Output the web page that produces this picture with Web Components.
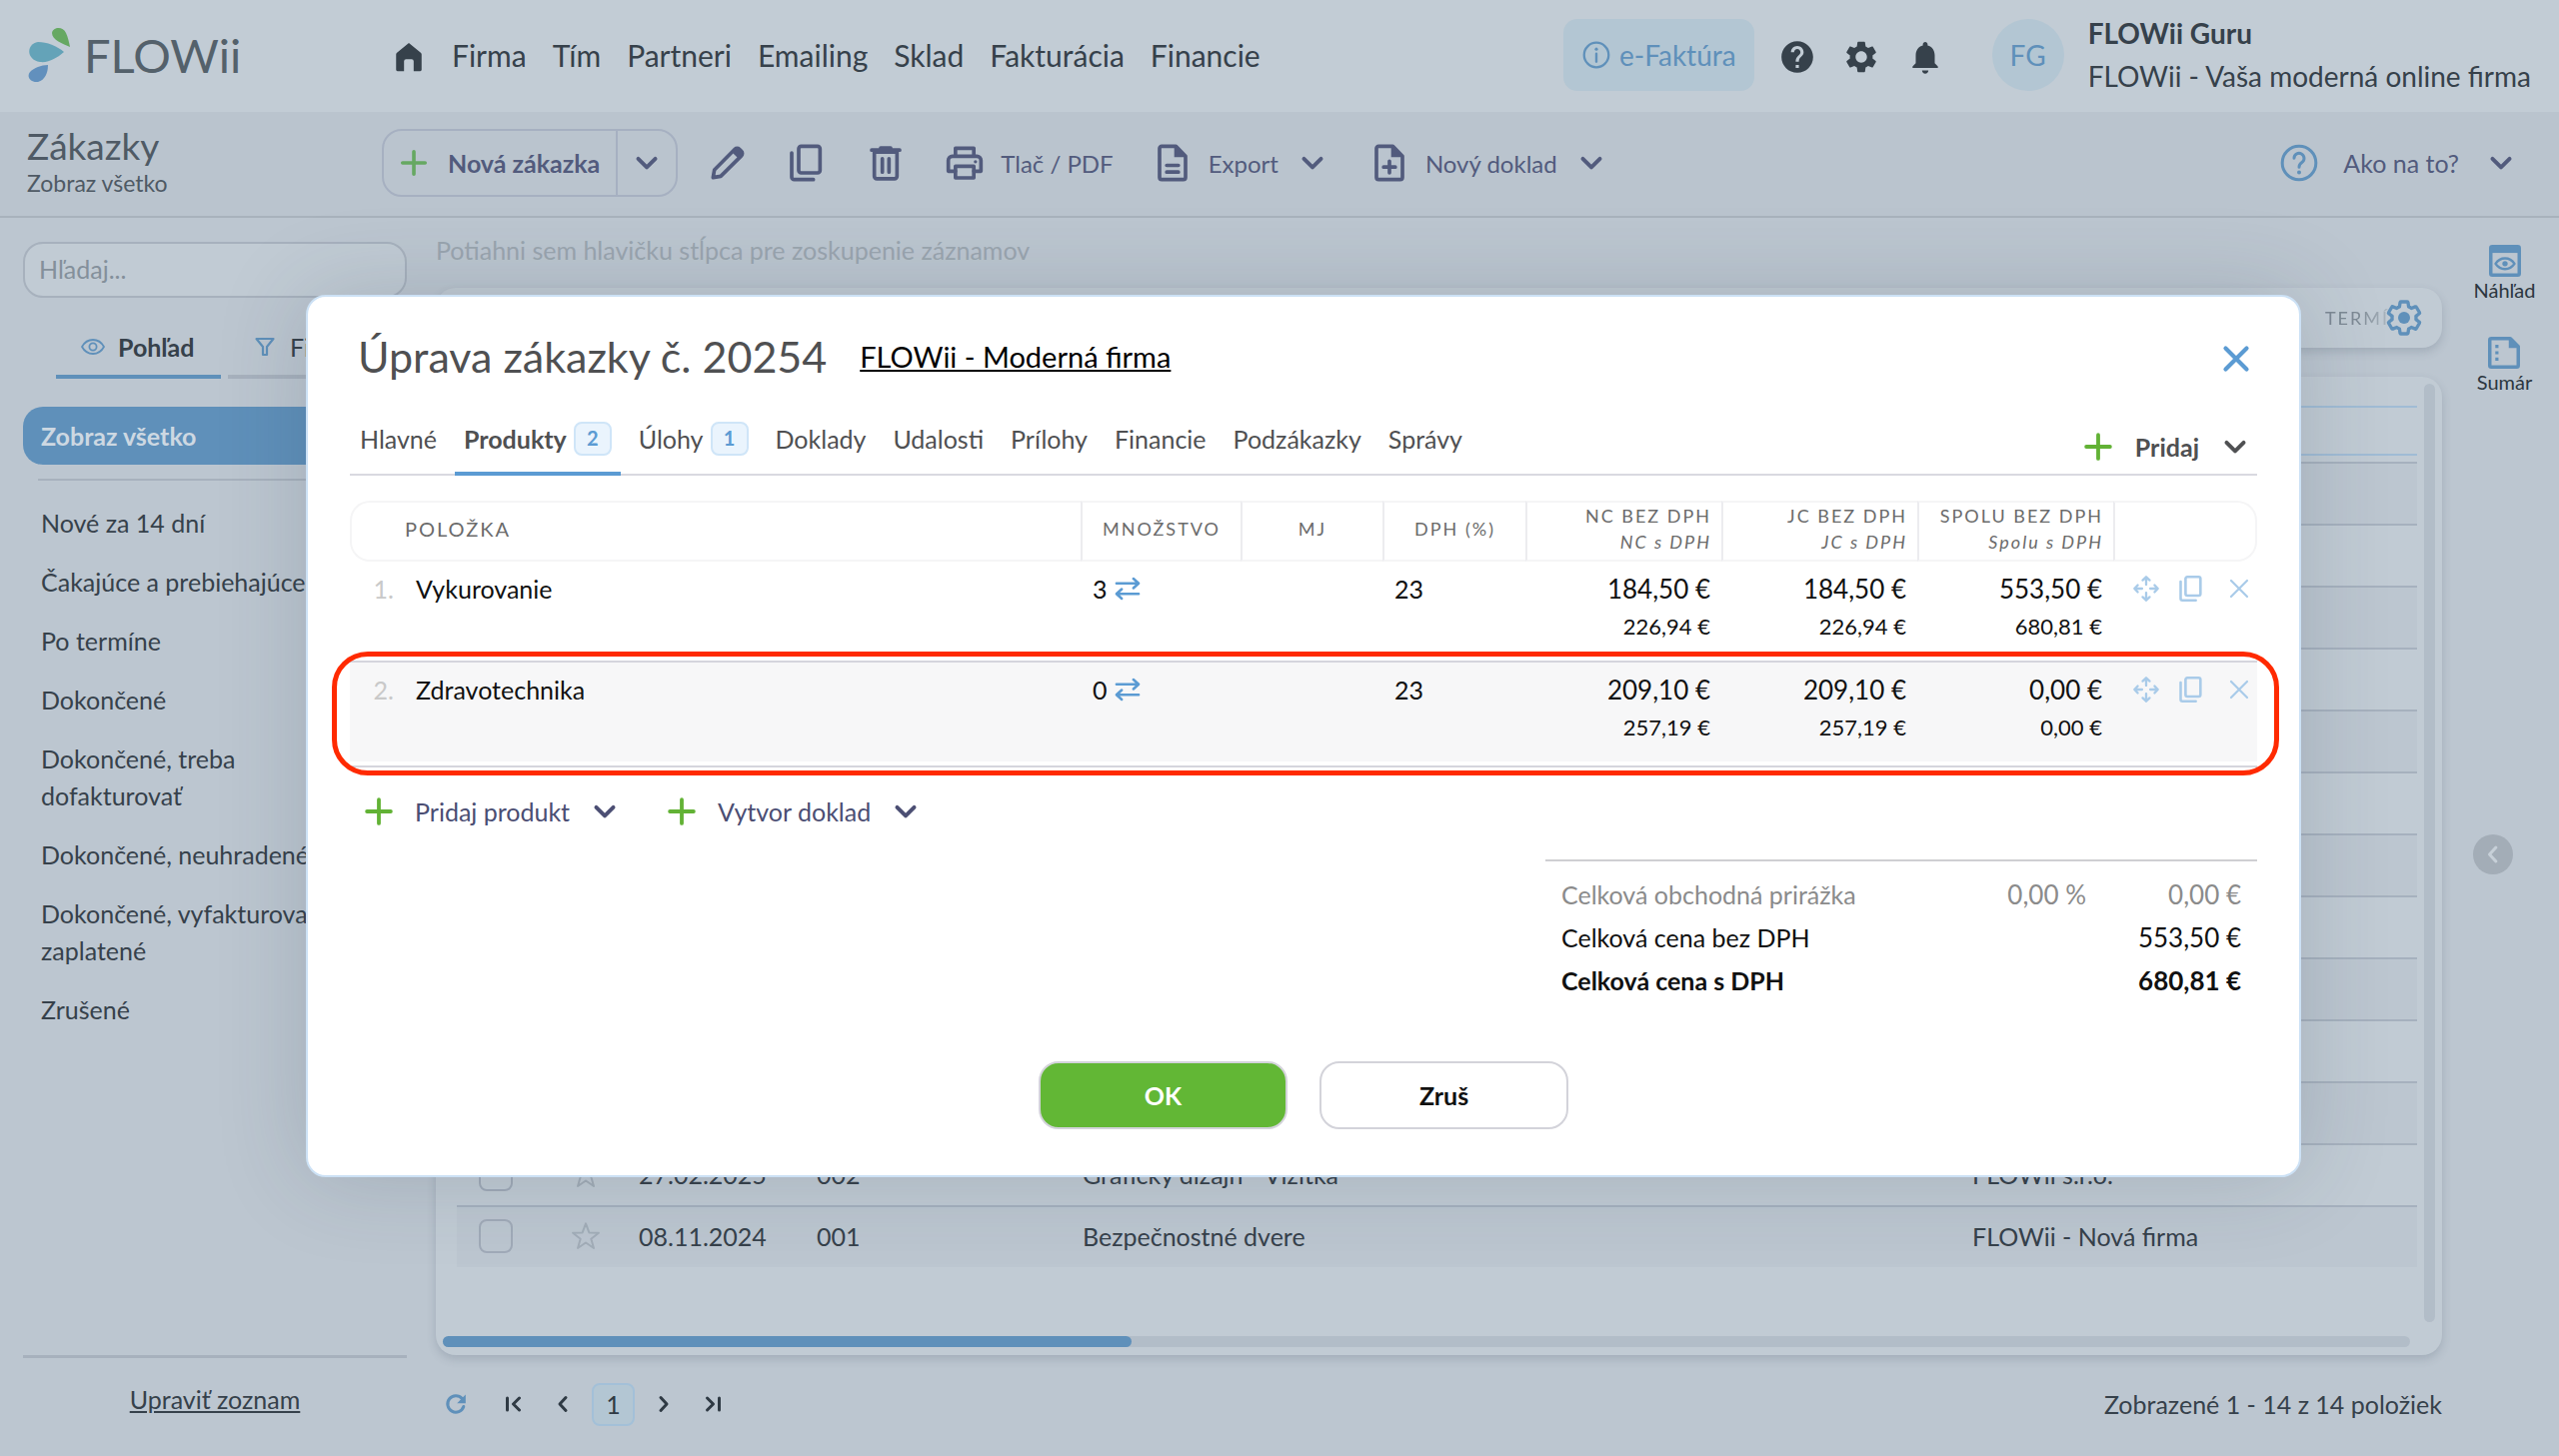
<!DOCTYPE html>
<html lang="sk">
<head>
<meta charset="utf-8">
<title>FLOWii - Zákazky</title>
<style>
    body {
        margin: 0;
        font-family: Lato, "Open Sans", sans-serif;
        font-size: 25px;
        line-height: 37px;
        color: #36414b;
        background: #bcc6d0;
        --blue: #5f90ba;
        --line: #a7b1bd;
        --ink: #525b7d;
        --green: #62b235;
    }
</style>
</head>
<body>
<flow-app></flow-app>

<script>
// Icon shapes on a 24x24 grid. "s" is drawn with strokes, "f" is filled.
const GEAR = 'M19.14 12.94c.04-.3.06-.61.06-.94 0-.32-.02-.64-.07-.94l2.03-1.58c.18-.14.23-.41.12-.61l-1.92-3.32c-.12-.22-.37-.29-.59-.22l-2.39.96c-.5-.38-1.03-.7-1.62-.94l-.36-2.54c-.04-.24-.24-.41-.48-.41h-3.84c-.24 0-.43.17-.47.41l-.36 2.54c-.59.24-1.13.57-1.62.94l-2.39-.96c-.22-.08-.47 0-.59.22L2.74 8.87c-.12.21-.08.47.12.61l2.03 1.58c-.05.3-.09.63-.09.94s.02.64.07.94l-2.03 1.58c-.18.14-.23.41-.12.61l1.92 3.32c.12.22.37.29.59.22l2.39-.96c.5.38 1.03.7 1.62.94l.36 2.54c.05.24.24.41.48.41h3.84c.24 0 .44-.17.47-.41l.36-2.54c.59-.24 1.13-.56 1.62-.94l2.39.96c.22.08.47 0 .59-.22l1.92-3.32c.12-.22.07-.47-.12-.61l-2.01-1.58z';

const ICONS = {
    home: '<path class="f" d="M12 2.2 20.4 9a1.6 1.6 0 0 1 .6 1.2V21a1 1 0 0 1-1 1h-4.6v-7a1.5 1.5 0 0 0-1.5-1.5h-3.8A1.5 1.5 0 0 0 8.600 15v7H4a1 1 0 0 1-1-1V10.200A1.600 1.600 0 0 1 3.600 9z"/>',
    info: '<circle class="s" cx="12" cy="12" r="9.200" stroke-width="1.700"/><path class="s" d="M12 11v6" stroke-width="1.800"/><circle class="f" cx="12" cy="7.600" r="1.200"/>',
    help: '<path class="f" d="M12 2C6.480 2 2 6.480 2 12s4.480 10 10 10 10-4.480 10-10S17.520 2 12 2zm1 17h-2v-2h2v2zm2.070-7.750l-.9.920C13.450 12.900 13 13.500 13 15h-2v-.5c0-1.100.45-2.100 1.170-2.830l1.240-1.260c.37-.36.59-.86.59-1.410 0-1.100-.9-2-2-2s-2 .9-2 2H8c0-2.210 1.790-4 4-4s4 1.790 4 4c0 .88-.36 1.680-.93 2.250z"/>',
    question: '<circle class="s" cx="12" cy="12" r="10.100" stroke-width="1.800"/><path class="s" d="M9 9.200a3 3 0 1 1 4.700 2.500C12.500 12.500 12 13.200 12 14.500" stroke-width="1.800"/><circle class="f" cx="12" cy="17.700" r="1.200"/>',
    gear: `<path class="f" fill-rule="evenodd" d="${GEAR}M12 15.600c-1.980 0-3.600-1.620-3.600-3.600s1.620-3.600 3.600-3.600 3.600 1.620 3.600 3.600-1.620 3.600-3.600 3.600z"/>`,
    gearline: `<path class="s" stroke-width="2" d="${GEAR}"/><circle class="f" cx="12" cy="12" r="3.600"/>`,
    bell: '<path class="f" d="M12 22.500c1.100 0 2-.9 2-2h-4c0 1.100.89 2 2 2zm6-6.500v-5c0-3.070-1.640-5.640-4.500-6.320V4c0-.83-.67-1.500-1.500-1.500s-1.500.67-1.500 1.500v.68C7.630 5.360 6 7.920 6 11v5l-2 2v1h16v-1l-2-2z"/>',
    plus: '<path class="s" d="M12 4.500v15M4.500 12h15" stroke-width="2.400"/>',
    down: '<path class="s" d="M6.300 9.200 12 14.900l5.700-5.700" stroke-width="2.600"/>',
    pencil: '<path class="s" d="M3.200 20.800l.8-4.600L16.300 3.800a1.900 1.900 0 0 1 2.700 0l1.200 1.200a1.900 1.900 0 0 1 0 2.700L7.800 20z"/><path class="f" d="M14.500 5.600l2-2.100c.9-.8 2-.8 2.900 0l1.100 1.100c.8.900.8 2 0 2.900l-2 2z"/>',
    copy: '<rect class="s" x="7.200" y="2" width="12.800" height="16" rx="1.500"/><path class="s" d="M3 6v14.500A1.500 1.500 0 0 0 4.500 22H16"/>',
    trash: '<path class="s" d="M5.200 5.500h13.600V20a1.500 1.500 0 0 1-1.500 1.500H6.700A1.500 1.500 0 0 1 5.200 20zM3.600 4.300h16.800M9 3h6M10 9.500v8M14 9.500v8"/>',
    printer: '<path class="s" d="M6.500 8V3.200h11V8M6.500 17H2.200v-6.500A2.500 2.500 0 0 1 4.700 8h14.600a2.500 2.500 0 0 1 2.500 2.500V17h-4.300"/><rect class="s" x="6.500" y="14" width="11" height="7"/><circle class="f" cx="18.500" cy="11.300" r="1"/>',
    doc: '<path class="s" d="M14 2H5.500A1.300 1.300 0 0 0 4.200 3.300v17.400A1.300 1.300 0 0 0 5.500 22h13a1.300 1.300 0 0 0 1.300-1.300V8zM8.500 13.500h7M8.500 17.500h7"/><path class="f" d="M13 2v6.500h6.800z"/>',
    docplus: '<path class="s" d="M14 2H5.500A1.300 1.300 0 0 0 4.200 3.300v17.400A1.300 1.300 0 0 0 5.500 22h13a1.300 1.300 0 0 0 1.300-1.300V8zM12 11v7M8.500 14.500h7"/><path class="f" d="M13 2v6.500h6.800z"/>',
    eye: '<path class="s" stroke-width="1.800" d="M1 12C3.500 7.500 7.500 5 12 5s8.500 2.500 11 7c-2.500 4.500-6.500 7-11 7S3.500 16.500 1 12z"/><circle class="s" stroke-width="1.800" cx="12" cy="12" r="3.600"/>',
    filter: '<path class="s" d="M3.500 4h17l-6.500 8v8h-4v-8z"/>',
    preview: '<rect class="s" x="3" y="3" width="18" height="18" rx="1"/><path class="f" d="M3 3h18v4H3z"/><path class="s" stroke-width="1.500" d="M6 13.800c3-4.500 9-4.500 12 0-3 4.500-9 4.500-12 0z"/><circle class="f" cx="12" cy="13.800" r="1.700"/>',
    summary: '<path class="s" d="M16 3H4a1 1 0 0 0-1 1v16a1 1 0 0 0 1 1h16a1 1 0 0 0 1-1V8z"/><path class="f" d="M15 3v6h6z"/><path class="f" d="M6.500 7h2v2h-2zM6.500 11h2v2h-2zM6.500 15h2v2h-2z"/>',
    left: '<path class="s" d="M14.500 6l-5.500 6 5.500 6" stroke-width="2.600"/>',
    close: '<path class="s" d="M5 5l14 14M19 5L5 19" stroke-width="2.800"/>',
    thinclose: '<path class="s" d="M4 4l16 16M20 4L4 20" stroke-width="2.200"/>',
    swap: '<path class="s" stroke-width="2.200" d="M2.500 7.500H21M17 3.500l4.500 4-4.500 4M21.500 16.500H3M7 12.500l-4.500 4 4.500 4"/>',
    move: '<path class="s" stroke-width="2" d="M9 4.800 12 2l3 2.800M12 2v6.500M9 19.200l3 2.800 3-2.800M12 22v-6.500M4.800 9 2 12l2.800 3M2 12h6.500M19.200 9l2.800 3-2.800 3M22 12h-6.500"/>',
    star: '<path class="s" stroke-width="1.500" d="M12 2.500l2.500 6.800 7.200.2-5.700 4.500 2 7-6-4.100-6 4.100 2-7-5.700-4.500 7.200-.2z"/>',
    refresh: '<path class="s" stroke-width="3" d="M19.800 14.500a8.200 8.200 0 1 1-1.600-8"/><path class="f" d="M21.800 2.500v8.800h-8.600z"/>',
    first: '<path class="s" d="M5.500 6v12M17.500 6l-6 6 6 6" stroke-width="3"/>',
    prev: '<path class="s" d="M15 5.500 9 12l6 6.500" stroke-width="3"/>',
    next: '<path class="s" d="M9 5.500 15 12l-6 6.500" stroke-width="3"/>',
    last: '<path class="s" d="M18.500 6v12M6.500 6l6 6-6 6" stroke-width="3"/>'
};

// Base class: every element renders its markup once into an open root
class FlowElement extends HTMLElement {
    connectedCallback() {
        if (this.shadowRoot) return;
        this.attachShadow({ mode: 'open' });
        this.shadowRoot.innerHTML = this.template();
    }
}

const RESET = `
    * { box-sizing: border-box; }
    button, input { font: inherit; color: inherit; margin: 0; padding: 0; border: 0; background: none; }
    button { cursor: pointer; display: inline-flex; align-items: center; justify-content: center; white-space: nowrap; }
    a { color: inherit; text-decoration: none; }
    table { border-spacing: 0; width: 100%; table-layout: fixed; }
    th, td { padding: 0; text-align: left; font-weight: normal; white-space: nowrap; }
`;

class FlowIcon extends FlowElement {
    template() {
        return `
            <style>
                :host { display: inline-flex; flex: none; width: var(--size, 40px); height: var(--size, 40px); }
                svg { width: 100%; height: 100%; overflow: visible; }
                .f { fill: currentColor; }
                .s { fill: none; stroke: currentColor; stroke-linecap: round; stroke-linejoin: round; }
            </style>
            <svg viewBox="0 0 24 24" stroke-width="2.200" aria-hidden="true">${ICONS[this.getAttribute('name')]}</svg>
        `;
    }
}

// Icon + label + optional chevron
class FlowMenuButton extends FlowElement {
    template() {
        return `
            <style>
                ${RESET}
                :host { display: inline-flex; }
                button { gap: var(--gap, 18px); height: 40px; }
                .icon { color: var(--icon-color, currentColor); --size: var(--icon-size, 40px); }
                .chevron { --size: 36px; }
            </style>
            <button type="button">
                <flow-icon class="icon" name="${this.getAttribute('icon')}"></flow-icon>
                <slot></slot>
                ${this.hasAttribute('menu') ? '<flow-icon class="chevron" name="down"></flow-icon>' : ''}
            </button>
        `;
    }
}

class FlowHeader extends FlowElement {
    template() {
        const links = ['Firma', 'Tím', 'Partneri', 'Emailing', 'Sklad', 'Fakturácia', 'Financie'];
        return `
            <style>
                ${RESET}
                :host { display: block; background: #c2ccd5; }
                header { display: flex; align-items: center; height: 112px; padding: 0 28px 2px 27px; }
                .logo { display: flex; align-items: center; width: 365px; gap: 13px; font-size: 47px; color: #54616b; }
                .logo svg { width: 44px; height: 56px; }
                nav { display: flex; align-items: center; gap: 26px; font-size: 30px; }
                nav flow-icon { --size: 34px; display: flex; margin-top: 4px; }
                .tools { display: flex; align-items: center; margin-left: auto; font-size: 28px; }
                .invoice { gap: 7px; height: 72px; padding: 0 18px 0 17px; border-radius: 14px; background: #b3c6d3; color: var(--blue); margin-right: 24px; }
                .invoice flow-icon { --size: 32px; }
                .round { margin: 4px 26px 0 0; }
                .round flow-icon { --size: 38px; }
                .avatar { display: flex; align-items: center; justify-content: center; width: 72px; height: 72px; margin: 0 24px 0 22px; border-radius: 50%; background: #b3c6d3; color: var(--blue); }
                .user { line-height: 43px; }
                .user strong { display: block; }
            </style>
            <header>
                <a class="logo" href="#">
                    <svg viewBox="0 0 44 56" aria-hidden="true">
                        <path fill="#66a862" d="M43 20C36 17 25 13 25 6 26 0 36-1 39 6c2 4 3 9 4 14z"/>
                        <path fill="#64a3b8" d="M37 25c-7 6-15 11-24 10C-1 33-1 17 11 15c9 0 19 4 26 10z"/>
                        <path fill="#6290bd" d="M21 38c0 8-3 15-10 17C4 56-1 50 3 45c4-4 11-7 18-7z"/>
                    </svg>
                    FLOWii
                </a>
                <nav>
                    <a href="#" aria-label="Domov"><flow-icon name="home"></flow-icon></a>
                    ${links.map((l) => `<a href="#">${l}</a>`).join('')}
                </nav>
                <div class="tools">
                    <button class="invoice"><flow-icon name="info"></flow-icon>e-Faktúra</button>
                    <button class="round" aria-label="Pomoc"><flow-icon name="help"></flow-icon></button>
                    <button class="round" aria-label="Nastavenia"><flow-icon name="gear"></flow-icon></button>
                    <button class="round" aria-label="Upozornenia"><flow-icon name="bell"></flow-icon></button>
                    <span class="avatar">FG</span>
                    <div class="user"><strong>FLOWii Guru</strong>FLOWii - Vaša moderná online firma</div>
                </div>
            </header>
        `;
    }
}

class FlowToolbar extends FlowElement {
    template() {
        return `
            <style>
                ${RESET}
                :host { display: flex; align-items: center; height: 106px; padding: 0 40px 2px 27px; background: #bac4ce; border-bottom: 2px solid #a8b2bc; box-sizing: border-box; color: var(--ink); }
                .title { width: 355px; color: #4f5a65; }
                h1 { margin: 0; font-size: 37px; line-height: 40px; font-weight: normal; }
                .title span { display: block; font-size: 23px; line-height: 34px; }
                .split { display: flex; height: 68px; border: 2px solid #a6b0c1; border-radius: 20px; margin-right: 30px; font-weight: bold; }
                .split .new { gap: 16px; padding: 0 16px 0 12px; }
                .split .new flow-icon { --size: 36px; color: #66a862; }
                .split .more { width: 60px; border-left: 2px solid #a6b0c1; }
                .split .more flow-icon { --size: 36px; }
                .actions { display: flex; gap: 39px; font-size: 24px; --gap: 16px; }
                .how { margin-left: auto; --icon-color: var(--blue); --gap: 24px; }
            </style>
            <div class="title"><h1>Zákazky</h1><span>Zobraz všetko</span></div>
            <div class="split">
                <button class="new"><flow-icon name="plus"></flow-icon>Nová zákazka</button>
                <button class="more" aria-label="Viac"><flow-icon name="down"></flow-icon></button>
            </div>
            <div class="actions">
                <button aria-label="Upraviť"><flow-icon name="pencil"></flow-icon></button>
                <button aria-label="Kopírovať"><flow-icon name="copy"></flow-icon></button>
                <button aria-label="Zmazať"><flow-icon name="trash"></flow-icon></button>
                <flow-menu-button icon="printer">Tlač / PDF</flow-menu-button>
                <flow-menu-button icon="doc" menu>Export</flow-menu-button>
                <flow-menu-button icon="docplus" menu>Nový doklad</flow-menu-button>
            </div>
            <flow-menu-button class="how" icon="question" menu>Ako na to?</flow-menu-button>
        `;
    }
}

class FlowSidebar extends FlowElement {
    template() {
        const views = ['Nové za 14 dní', 'Čakajúce a prebiehajúce', 'Po termíne', 'Dokončené',
            'Dokončené, treba dofakturovať', 'Dokončené, neuhradené', 'Dokončené, vyfakturované, zaplatené', 'Zrušené'];
        return `
            <style>
                ${RESET}
                :host { display: flex; flex-direction: column; padding: 24px 29px 0 23px; box-sizing: border-box; }
                input { height: 56px; padding: 0 14px 2px; border: 2px solid var(--line); border-radius: 20px; background: #c1cbd4; }
                input::placeholder { color: #84909b; opacity: 1; }
                .tabs { display: flex; gap: 7px; margin: 29px 0 28px 33px; }
                .tabs button { justify-content: flex-start; width: 165px; height: 52px; padding: 0 0 8px 25px; gap: 13px; border-bottom: 4px solid var(--line); }
                .tabs button.on { border-color: var(--blue); font-weight: bold; }
                .tabs flow-icon { --size: 24px; color: var(--blue); }
                .active { display: flex; align-items: center; height: 58px; padding: 0 18px; border-radius: 20px; background: var(--blue); color: #cdd8e2; font-weight: bold; }
                ul { list-style: none; margin: 14px 0 0 15px; padding: 13px 50px 0 3px; border-top: 2px solid var(--line); }
                li { padding: 11px 0; }
                footer { margin-top: auto; height: 101px; padding-top: 23px; border-top: 3px solid var(--line); text-align: center; }
                footer a { text-decoration: underline; }
            </style>
            <input type="search" placeholder="Hľadaj..." aria-label="Hľadaj">
            <div class="tabs">
                <button class="on"><flow-icon name="eye"></flow-icon>Pohľad</button>
                <button><flow-icon name="filter"></flow-icon>Filter</button>
            </div>
            <a class="active" href="#">Zobraz všetko</a>
            <ul>${views.map((v) => `<li><a href="#">${v}</a></li>`).join('')}</ul>
            <footer><a href="#">Upraviť zoznam</a></footer>
        `;
    }
}

class FlowGrid extends FlowElement {
    row([date, number, name, firm]) {
        return `
            <tr>
                <td>${date ? '<input type="checkbox" aria-label="Vybrať">' : ''}</td>
                <td>${date ? '<flow-icon name="star"></flow-icon>' : ''}</td>
                <td>${date}</td><td>${number}</td><td>${name}</td><td>${firm}</td>
            </tr>
        `;
    }

    template() {
        const rows = Array.from({ length: 11 }, () => ['', '', '', '']);
        rows.push(['27.02.2025', '002', 'Grafický dizajn - Vizitka', 'FLOWii s.r.o.']);
        rows.push(['08.11.2024', '001', 'Bezpečnostné dvere', 'FLOWii - Nová firma']);
        return `
            <style>
                ${RESET}
                :host { display: flex; flex-direction: column; padding-top: 14px; box-sizing: border-box; min-width: 0; }
                .hint { margin: 0 0 19px; color: #9aa5af; }
                .head, .card { background: #c1cbd4; border-radius: 20px; box-shadow: 0 4px 10px rgba(60, 75, 95, .2); }
                .head { display: flex; align-items: center; justify-content: flex-end; height: 60px; padding-right: 18px; margin-bottom: 29px; }
                .head span { margin-right: -5px; font-size: 18px; letter-spacing: 2px; color: #7d8994; mask-image: linear-gradient(90deg, #000 50%, rgba(0, 0, 0, .3)); }
                .head flow-icon { --size: 40px; color: var(--blue); }
                .card { flex: 1; display: grid; grid-template-columns: 1fr 11px; grid-template-rows: 1fr 11px; gap: 14px 7px; padding: 7px 7px 8px; }
                .rows { padding: 22px 0 0 14px; min-width: 0; }
                .search { height: 50px; margin-bottom: 6px; border: solid #a0bcd5; border-width: 2px 0; }
                .vbar, .hbar { border-radius: 6px; background: #b2bdc8; }
                .hbar { grid-column: 1 / -1; margin-right: 25px; }
                .hbar div { width: 35%; height: 11px; border-radius: 6px; background: var(--blue); }
                td { height: 62px; padding: 0 0 2px 22px; border-top: 2px solid #a6b1be; }
                tr:nth-child(odd) td { background: #bcc6d0; }
                td flow-icon { --size: 32px; display: flex; color: #a2adb8; }
                input { appearance: none; display: block; width: 34px; height: 34px; border: 2px solid #a0aab8; border-radius: 8px; }
                footer { display: flex; align-items: center; height: 101px; padding-bottom: 3px; }
                footer button { width: 40px; height: 43px; margin-right: 9px; color: #2f3a44; }
                footer button flow-icon { --size: 24px; }
                footer .reload { margin-right: 18px; color: var(--blue); }
                footer .page { width: 43px; border: 2px solid #a3c0d8; border-radius: 8px; background: #b3c6d3; }
                footer span { margin-left: auto; }
            </style>
            <p class="hint">Potiahni sem hlavičku stĺpca pre zoskupenie záznamov</p>
            <div class="head"><span>TERMÍ</span><flow-icon name="gearline"></flow-icon></div>
            <div class="card">
                <div class="rows">
                    <div class="search"></div>
                    <table>
                        <colgroup><col width="91"><col width="69"><col width="178"><col width="266"><col><col width="467"></colgroup>
                        <tbody>${rows.map((r) => this.row(r)).join('')}</tbody>
                    </table>
                </div>
                <div class="vbar"></div>
                <div class="hbar"><div></div></div>
            </div>
            <footer>
                <button class="reload" aria-label="Obnoviť"><flow-icon name="refresh"></flow-icon></button>
                <button aria-label="Prvá"><flow-icon name="first"></flow-icon></button>
                <button aria-label="Predošlá"><flow-icon name="prev"></flow-icon></button>
                <button class="page">1</button>
                <button aria-label="Ďalšia"><flow-icon name="next"></flow-icon></button>
                <button aria-label="Posledná"><flow-icon name="last"></flow-icon></button>
                <span>Zobrazené 1 - 14 z 14 položiek</span>
            </footer>
        `;
    }
}

class FlowRail extends FlowElement {
    template() {
        return `
            <style>
                ${RESET}
                :host { display: flex; flex-direction: column; align-items: center; gap: 34px; padding: 24px 0 0 8px; box-sizing: border-box; }
                .item { flex-direction: column; font-size: 20px; line-height: 20px; color: #2c3740; }
                .item flow-icon { --size: 38px; color: var(--blue); }
                .toggle { width: 40px; height: 40px; margin: 409px 24px 0 0; border-radius: 50%; background: #a3adb7; color: #c7d0d8; }
                .toggle flow-icon { --size: 28px; }
            </style>
            <button class="item"><flow-icon name="preview"></flow-icon>Náhľad</button>
            <button class="item"><flow-icon name="summary"></flow-icon>Sumár</button>
            <button class="toggle" aria-label="Rozbaliť"><flow-icon name="left"></flow-icon></button>
        `;
    }
}

class FlowTab extends FlowElement {
    template() {
        const count = this.getAttribute('count');
        return `
            <style>
                ${RESET}
                :host { display: block; }
                button { height: 60px; padding: 0 9px 10px; gap: 7px; border-bottom: 4px solid transparent; }
                :host([active]) button { border-color: #5b9bd3; font-weight: bold; }
                .badge { width: 38px; height: 34px; border: 2px solid #cfe5f8; border-radius: 8px; background: #eaf4fd; color: #5b9bd3; font-size: 20px; line-height: 29px; font-weight: bold; }
            </style>
            <button type="button" role="tab"><slot></slot>${count ? `<span class="badge">${count}</span>` : ''}</button>
        `;
    }
}

class FlowOrderItems extends FlowElement {
    row(item, i) {
        const prices = item.prices.map(([net, gross]) => `<td class="num">${net}<small>${gross}</small></td>`).join('');
        return `
            <tr class="${item.marked ? 'marked' : ''}">
                <td><span class="no">${i + 1}.</span>${item.name}</td>
                <td class="qty">${item.qty} <flow-icon name="swap"></flow-icon></td>
                <td></td>
                <td class="vat">${item.vat}</td>
                ${prices}
                <td>
                    <div class="tools">
                        <button aria-label="Presunúť"><flow-icon name="move"></flow-icon></button>
                        <button aria-label="Kopírovať"><flow-icon name="copy"></flow-icon></button>
                        <button aria-label="Odstrániť"><flow-icon class="x" name="thinclose"></flow-icon></button>
                    </div>
                </td>
            </tr>
        `;
    }

    template() {
        const items = [
            { name: 'Vykurovanie', qty: 3, vat: 23, prices: [['184,50 €', '226,94 €'], ['184,50 €', '226,94 €'], ['553,50 €', '680,81 €']] },
            { name: 'Zdravotechnika', qty: 0, vat: 23, marked: true, prices: [['209,10 €', '257,19 €'], ['209,10 €', '257,19 €'], ['0,00 €', '0,00 €']] }
        ];
        return `
            <style>
                ${RESET}
                :host { display: block; color: #111; }
                table { padding-bottom: 4px; border-bottom: 2px solid #d5d5dd; }
                th { height: 61px; padding-bottom: 5px; border: solid #f5f5f6; border-width: 2px 0; font-size: 18px; line-height: 26px; letter-spacing: 2px; color: #6b6b6b; }
                th:first-child { padding-left: 53px; border-left-width: 2px; border-radius: 20px 0 0 20px; font-size: 20px; }
                th:last-child { border-right-width: 2px; border-radius: 0 20px 20px 0; }
                th:not(:first-child) { border-left: 2px solid #ececef; }
                th.mid { text-align: center; }
                th.num { padding-right: 10px; }
                th i { display: block; }
                .num { text-align: right; }
                td { height: 99px; padding-top: 8px; vertical-align: top; line-height: 38px; }
                td.num { padding-right: 11px; font-size: 26px; }
                small { display: block; font-size: 22px; }
                .no { display: inline-block; width: 44px; margin-right: 22px; text-align: right; color: #c9c9c9; }
                .qty { padding-left: 12px; }
                .qty flow-icon { --size: 28px; vertical-align: -4px; color: #5b9bd3; }
                .vat { padding-left: 12px; }
                .tools { display: flex; align-items: center; gap: 17px; height: 38px; padding-left: 19px; color: #a9cbe9; }
                .tools flow-icon { --size: 28px; }
                .tools .x { --size: 24px; margin-left: 5px; }
                .marked { position: relative; }
                .marked td { height: 101px; border-top: 2px solid #d5d5dd; background: #f7f7f8; }
                /* red callout drawn round the highlighted row */
                .marked td:first-child::after { content: ""; position: absolute; inset: -9px -22px -14px -18px; border: 5px solid #ff2a00; border-radius: 36px; pointer-events: none; }
            </style>
            <table>
                <colgroup><col><col width="160"><col width="142"><col width="143"><col width="196"><col width="196"><col width="196"><col width="144"></colgroup>
                <thead>
                    <tr>
                        <th>POLOŽKA</th><th class="mid">MNOŽSTVO</th><th class="mid">MJ</th><th class="mid">DPH (%)</th>
                        <th class="num">NC BEZ DPH<i>NC s DPH</i></th>
                        <th class="num">JC BEZ DPH<i>JC s DPH</i></th>
                        <th class="num">SPOLU BEZ DPH<i>Spolu s DPH</i></th>
                        <th></th>
                    </tr>
                </thead>
                <tbody>${items.map((item, i) => this.row(item, i)).join('')}</tbody>
            </table>
        `;
    }
}

class FlowTotals extends FlowElement {
    template() {
        return `
            <style>
                ${RESET}
                :host { display: block; padding: 12px 16px 0; border-top: 2px solid #cfcfd2; color: #111; }
                td, th { height: 43px; }
                td { text-align: right; font-size: 26px; }
                .muted { color: #8b8b8b; }
                .sum * { font-weight: bold; }
            </style>
            <table>
                <colgroup><col><col width="155"><col width="155"></colgroup>
                <tr class="muted"><th scope="row">Celková obchodná prirážka</th><td>0,00 %</td><td>0,00 €</td></tr>
                <tr><th scope="row">Celková cena bez DPH</th><td></td><td>553,50 €</td></tr>
                <tr class="sum"><th scope="row">Celková cena s DPH</th><td></td><td>680,81 €</td></tr>
            </table>
        `;
    }
}

class FlowOrderDialog extends FlowElement {
    template() {
        return `
            <style>
                ${RESET}
                :host { position: absolute; inset: 0; padding: 295px 258px 0 306px; }
                section { padding: 35px 42px 46px; border: 2px solid #cce1f5; border-radius: 20px; background: #fff; box-shadow: 0 0 90px rgba(40, 55, 70, .18); color: #4f5052; }
                .title { display: flex; align-items: center; gap: 33px; height: 48px; padding-left: 8px; }
                h2 { margin: 0; font-size: 43px; font-weight: normal; }
                .title a { font-size: 29px; color: #000; text-decoration: underline; }
                .close { margin: 6px 3px 0 auto; color: #5b9bd3; --size: 36px; }
                .bar { display: flex; align-items: flex-end; margin: 36px 0 25px; box-shadow: inset 0 -2px #d9d9e0; }
                .tabs { display: flex; gap: 9px; padding-left: 1px; }
                .bar flow-menu-button { margin: 0 4px 9px auto; font-weight: bold; }
                flow-menu-button { --icon-color: var(--green); --icon-size: 38px; }
                .add { display: flex; gap: 40px; margin: 24px 0 28px; padding-left: 10px; --gap: 17px; color: #4b4e73; }
                flow-totals { width: 712px; margin-left: auto; box-sizing: border-box; }
                .actions { display: flex; justify-content: center; gap: 32px; margin-top: 59px; }
                .actions button { width: 249px; height: 68px; border: 2px solid #d3d3da; border-radius: 20px; font-weight: bold; color: #111; }
                .actions .ok { background: #62b735; color: #fff; }
            </style>
            <section role="dialog" aria-label="Úprava zákazky">
                <div class="title">
                    <h2>Úprava zákazky č. 20254</h2>
                    <a href="#">FLOWii - Moderná firma</a>
                    <button class="close" aria-label="Zavrieť"><flow-icon name="close"></flow-icon></button>
                </div>
                <div class="bar">
                    <div class="tabs" role="tablist">
                        <flow-tab>Hlavné</flow-tab>
                        <flow-tab active count="2">Produkty</flow-tab>
                        <flow-tab count="1">Úlohy</flow-tab>
                        <flow-tab>Doklady</flow-tab>
                        <flow-tab>Udalosti</flow-tab>
                        <flow-tab>Prílohy</flow-tab>
                        <flow-tab>Financie</flow-tab>
                        <flow-tab>Podzákazky</flow-tab>
                        <flow-tab>Správy</flow-tab>
                    </div>
                    <flow-menu-button icon="plus" menu>Pridaj</flow-menu-button>
                </div>
                <flow-order-items></flow-order-items>
                <div class="add">
                    <flow-menu-button icon="plus" menu>Pridaj produkt</flow-menu-button>
                    <flow-menu-button icon="plus" menu>Vytvor doklad</flow-menu-button>
                </div>
                <flow-totals></flow-totals>
                <div class="actions">
                    <button class="ok">OK</button>
                    <button>Zruš</button>
                </div>
            </section>
        `;
    }
}

class FlowApp extends FlowElement {
    template() {
        return `
            <style>
                :host { position: relative; display: flex; flex-direction: column; min-height: 100vh; }
                main { flex: 1; display: grid; grid-template-columns: 436px 1fr 117px; }
            </style>
            <flow-header></flow-header>
            <flow-toolbar></flow-toolbar>
            <main>
                <flow-sidebar></flow-sidebar>
                <flow-grid></flow-grid>
                <flow-rail></flow-rail>
            </main>
            <flow-order-dialog></flow-order-dialog>
        `;
    }
}

customElements.define('flow-icon', FlowIcon);
customElements.define('flow-menu-button', FlowMenuButton);
customElements.define('flow-header', FlowHeader);
customElements.define('flow-toolbar', FlowToolbar);
customElements.define('flow-sidebar', FlowSidebar);
customElements.define('flow-grid', FlowGrid);
customElements.define('flow-rail', FlowRail);
customElements.define('flow-tab', FlowTab);
customElements.define('flow-order-items', FlowOrderItems);
customElements.define('flow-totals', FlowTotals);
customElements.define('flow-order-dialog', FlowOrderDialog);
customElements.define('flow-app', FlowApp);
</script>
</body>
</html>
